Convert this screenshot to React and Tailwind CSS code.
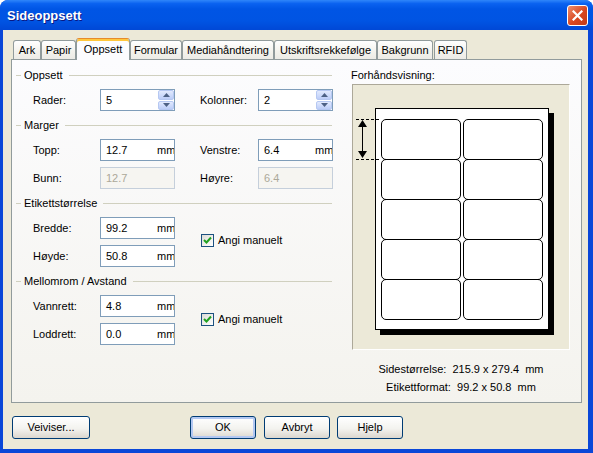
import React from 'react';

const tabs = [
  { label: 'Ark', w: 'w-[28px]' },
  { label: 'Papir', w: 'w-[35px]' },
  { label: 'Oppsett', w: 'w-[54px]', active: true },
  { label: 'Formular', w: 'w-[52px]' },
  { label: 'Mediahåndtering', w: 'w-[92px]' },
  { label: 'Utskriftsrekkefølge', w: 'w-[103px]' },
  { label: 'Bakgrunn', w: 'w-[56px] mr-[1px]' },
  { label: 'RFID', w: 'w-[33px]' },
];

const Spin = () => (
  <div className="w-[16px] h-[20px] flex flex-col gap-px">
    {[0, 1].map((i) => (
      <div
        key={i}
        className="flex-1 rounded-[2px] border border-[#B6C8F2] bg-[linear-gradient(to_bottom,#E2EAFE,#BCCDF8)] flex items-center justify-center"
      >
        <svg width="7" height="4" viewBox="0 0 7 4">
          {i === 0 ? <path d="M0 4 L3.5 0 L7 4 Z" fill="#4D6185" /> : <path d="M0 0 L3.5 4 L7 0 Z" fill="#4D6185" />}
        </svg>
      </div>
    ))}
  </div>
);

const Field = ({ value, unit, spin, disabled }) => (
  <div
    className={`w-[75px] h-[22px] flex items-center border ${
      disabled ? 'border-[#C5CFDB] bg-[#F6F5F1] text-[#ACA899]' : 'border-[#7F9DB9] bg-white text-black'
    }`}
  >
    <span className="flex-1 pl-[5px]">{value}</span>
    {unit && <span className="w-[17px] overflow-hidden whitespace-nowrap">mm</span>}
    {spin && <Spin />}
  </div>
);

const Row = ({ items }) => (
  <div className="flex items-center pl-[17px]">
    <span className="w-[67px]">{items[0]}</span>
    <Field {...items[1]} />
    {items[2] && (
      <>
        <span className="w-[58px] ml-[25px]">{items[2]}</span>
        <Field {...items[3]} />
      </>
    )}
  </div>
);

const GroupHeader = ({ title }) => (
  <div className="h-[14px] flex items-center mr-[2px]">
    <div className="w-[5px] border-t border-[#D0D0BF]" />
    <span className="ml-[3px] mr-[6px] leading-[14px]">{title}</span>
    <div className="flex-1 border-t border-[#D0D0BF]" />
  </div>
);

const CheckBox = ({ label, className }) => (
  <div className={`flex items-center ml-[26px] ${className}`}>
    <div className="w-[13px] h-[13px] border border-[#1C5180] bg-[linear-gradient(135deg,#DCDCD7,#FFFFFF)] flex items-center justify-center">
      <svg width="9" height="9" viewBox="0 0 9 9">
        <path d="M1 4 L3.5 6.5 L8 1.5" stroke="#21A121" strokeWidth="2" fill="none" />
      </svg>
    </div>
    <span className="ml-[4px]">{label}</span>
  </div>
);

const Button = ({ children, w, def }) => (
  <button
    className={`${w} h-[23px] rounded-[3px] border border-[#003C74] bg-[linear-gradient(to_bottom,#FFFFFF,#F3F3EF_55%,#DCD7CE)] text-black ${
      def ? 'shadow-[inset_0_0_0_2px_#B3C8F2]' : ''
    }`}
  >
    {children}
  </button>
);

export default function App() {
  return (
    <div className="w-[593px] h-[453px] flex flex-col bg-[#0A47D8] rounded-t-[8px] overflow-hidden font-['Liberation_Sans',Arial,sans-serif] text-[11px] text-black">
      {/* title bar */}
      <div className="h-[30px] flex items-center justify-between pl-[7px] pr-[5px] bg-[linear-gradient(to_bottom,#2F86FA_0%,#0A62F0_12%,#0055E5_30%,#0054E3_70%,#0048D6_100%)]">
        <span className="pt-[2px] text-[13px] font-bold text-white [text-shadow:1px_1px_0_#0A1883]">Sideoppsett</span>
        <div className="w-[21px] h-[21px] rounded-[3px] border border-white bg-[linear-gradient(135deg,#EE8F6E,#D8461F_55%,#C23B18)] flex items-center justify-center">
          <svg width="11" height="11" viewBox="0 0 11 11">
            <path d="M1.5 1.5 L9.5 9.5 M9.5 1.5 L1.5 9.5" stroke="white" strokeWidth="2.2" strokeLinecap="square" />
          </svg>
        </div>
      </div>

      {/* body */}
      <div className="flex-1 ml-[3px] mr-[5px] mb-[4px] bg-[#ECE9D8] flex flex-col pt-[8px]">
        <div className="relative z-10 h-[21px] flex items-end pl-[10px]">
          {tabs.map((t) =>
            t.active ? (
              <div
                key={t.label}
                className={`${t.w} h-[22px] -mb-px flex items-center justify-center rounded-t-[3px] border border-b-0 border-[#919B9C] border-t-[#E68B2C] bg-[#FCFCFE] shadow-[inset_0_2px_0_#FFC73C] pb-[1px]`}
              >
                {t.label}
              </div>
            ) : (
              <div
                key={t.label}
                className={`${t.w} h-[19px] flex items-center justify-center rounded-t-[3px] border border-b-0 border-[#919B9C] bg-[linear-gradient(to_bottom,#FFFFFF,#F3F2EC_60%,#ECEBE6)]`}
              >
                {t.label}
              </div>
            )
          )}
        </div>

        {/* panel */}
        <div className="ml-[8px] w-[571px] h-[344px] border border-[#919B9C] bg-[linear-gradient(to_bottom,#FCFCFE,#F4F3EE)] flex pt-[8px] pl-[4px]">
          {/* left column */}
          <div className="w-[318px] flex flex-col gap-[7px]">
            <div className="flex flex-col gap-[7px]">
              <GroupHeader title="Oppsett" />
              <Row items={['Rader:', { value: '5', spin: true }, 'Kolonner:', { value: '2', spin: true }]} />
            </div>
            <div className="flex flex-col gap-[7px]">
              <GroupHeader title="Marger" />
              <div className="flex flex-col gap-[6px]">
                <Row items={['Topp:', { value: '12.7', unit: true }, 'Venstre:', { value: '6.4', unit: true }]} />
                <Row items={['Bunn:', { value: '12.7', disabled: true }, 'Høyre:', { value: '6.4', disabled: true }]} />
              </div>
            </div>
            <div className="flex flex-col gap-[7px]">
              <GroupHeader title="Etikettstørrelse" />
              <div className="flex items-center">
                <div className="flex flex-col gap-[6px]">
                  <Row items={['Bredde:', { value: '99.2', unit: true }]} />
                  <Row items={['Høyde:', { value: '50.8', unit: true }]} />
                </div>
                <CheckBox label="Angi manuelt" className="mb-[3px]" />
              </div>
            </div>
            <div className="flex flex-col gap-[7px]">
              <GroupHeader title="Mellomrom / Avstand" />
              <div className="flex items-center">
                <div className="flex flex-col gap-[6px]">
                  <Row items={['Vannrett:', { value: '4.8', unit: true }]} />
                  <Row items={['Loddrett:', { value: '0.0', unit: true }]} />
                </div>
                <CheckBox label="Angi manuelt" className="mb-[1px]" />
              </div>
            </div>
          </div>

          {/* preview column */}
          <div className="ml-[18px] w-[218px] flex flex-col">
            <span className="h-[14px] leading-[14px] -ml-px">Forhåndsvisning:</span>
            <div className="relative mt-[2px] h-[266px] border border-[#ACA899] border-r-white border-b-white bg-[#ECE9D8] pl-[22px] pt-[23px]">
              <div className="w-[174px] h-[222px] border border-black bg-white shadow-[5px_5px_0_0_#000] pl-[5px] pt-[10px]">
                {[0, 1, 2, 3, 4].map((r) => (
                  <div key={r} className={`flex gap-[2px] ${r > 0 ? '-mt-px' : ''}`}>
                    <div className="w-[80px] h-[41px] border border-black rounded-[5px]" />
                    <div className="w-[80px] h-[41px] border border-black rounded-[5px]" />
                  </div>
                ))}
              </div>
              <svg className="absolute left-0 top-0" width="40" height="90" viewBox="0 0 40 90">
                <path d="M3 34.5 H28 M3 74.5 H28" stroke="black" strokeWidth="1" strokeDasharray="3 2" />
                <path d="M9.5 40 V68" stroke="black" strokeWidth="1" />
                <path d="M5 42 L9.5 35 L14 42 Z M5 66 L9.5 73 L14 66 Z" fill="black" />
              </svg>
            </div>
            <div className="mt-[12px] flex flex-col items-center gap-[4px] leading-[14px] whitespace-pre">
              <span>{'Sidestørrelse:  215.9 x 279.4  mm'}</span>
              <span>{'Etikettformat:  99.2 x 50.8  mm'}</span>
            </div>
          </div>
        </div>

        {/* buttons */}
        <div className="mt-[13px] flex items-center pl-[9px]">
          <Button w="w-[78px]">Veiviser...</Button>
          <div className="ml-[100px] flex gap-[8px]">
            <Button w="w-[66px]" def>OK</Button>
            <Button w="w-[66px]">Avbryt</Button>
          </div>
          <div className="ml-[7px]">
            <Button w="w-[66px]">Hjelp</Button>
          </div>
        </div>
      </div>
    </div>
  );
}
